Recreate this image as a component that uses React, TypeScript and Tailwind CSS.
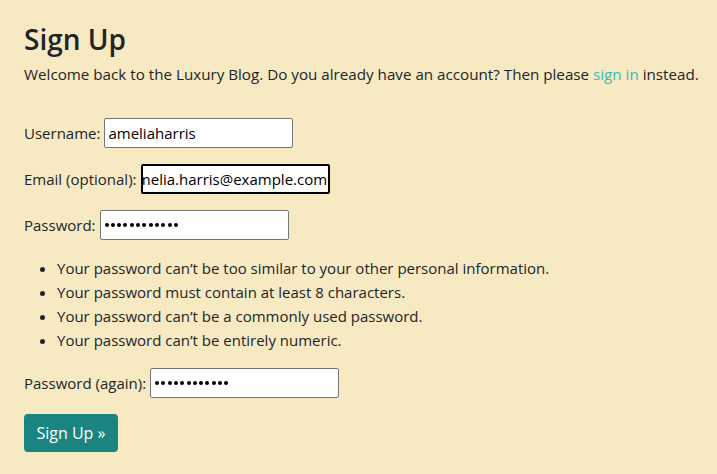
import React from "react";

const font = { fontFamily: '"Open Sans", "Noto Sans", sans-serif' };

function Dots() {
  return (
    <div className="flex items-center gap-[2.3px]">
      {Array.from({ length: 12 }).map((_, i) => (
        <span key={i} className="block w-[4px] h-[4px] rounded-full bg-black" />
      ))}
    </div>
  );
}

export default function App() {
  return (
    <div className="min-h-[474px] w-full bg-[#f7eac3] text-[#212529] text-[15px] leading-[24px] px-[24px] pt-[22px]" style={font}>
      <h1 className="text-[28px] leading-[34px] font-semibold mb-[6px]">Sign Up</h1>
      <p className="mb-[32px] whitespace-nowrap text-[15.2px]">
        Welcome back to the Luxury Blog. Do you already have an account? Then please{" "}
        <a className="text-[#33bdb7]">sign in</a> instead.
      </p>
      <form>
        <div className="flex items-center h-[30px] mb-[16px]">
          <label className="mr-[4px]">Username:</label>
          <div className="w-[189px] h-[30px] bg-white text-black rounded-[2px] border border-[#767676] flex items-center pl-[3px]">
            ameliaharris
          </div>
        </div>
        <div className="flex items-center h-[30px] mb-[16px]">
          <label className="mr-[4px]">Email (optional):</label>
          <div className="w-[189px] h-[30px] bg-white text-black rounded-[2px] border-2 border-black overflow-hidden flex items-center">
            <span className="whitespace-nowrap ml-[-14px]">amelia.harris@example.com</span>
          </div>
        </div>
        <div className="flex items-center h-[30px] mb-[16px]">
          <label className="mr-[4px]">Password:</label>
          <div className="w-[189px] h-[30px] bg-white rounded-[2px] border border-[#767676] flex items-center pl-[4px]">
            <Dots />
          </div>
        </div>
        <ul className="list-disc pl-[33px] mb-[16px] mt-[16px]">
          <li>Your password can’t be too similar to your other personal information.</li>
          <li>Your password must contain at least 8 characters.</li>
          <li>Your password can’t be a commonly used password.</li>
          <li>Your password can’t be entirely numeric.</li>
        </ul>
        <div className="flex items-center h-[30px] mb-[16px]">
          <label className="mr-[4px]">Password (again):</label>
          <div className="w-[189px] h-[30px] bg-white rounded-[2px] border border-[#767676] flex items-center pl-[4px]">
            <Dots />
          </div>
        </div>
        <button type="button" className="bg-[#198480] text-white rounded-[4px] w-[94px] h-[38px] text-[16px]">
          Sign Up »
        </button>
      </form>
    </div>
  );
}
